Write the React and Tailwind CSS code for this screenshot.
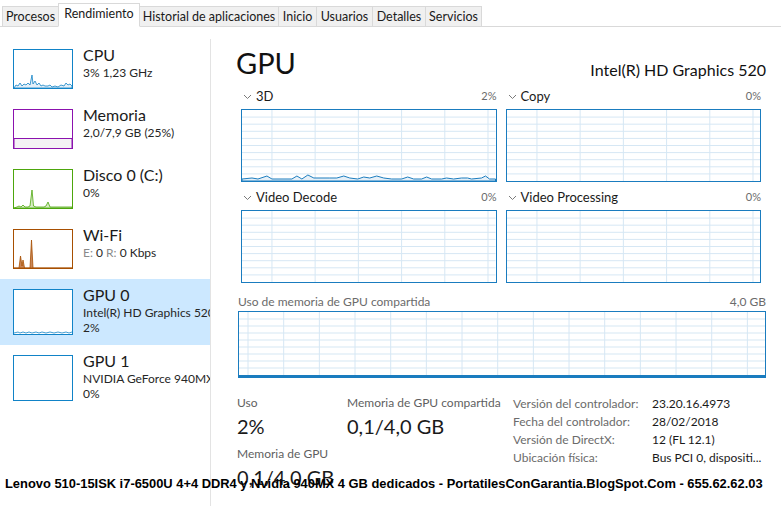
import React from "react";

const tabs = [
  { name: "Procesos", w: "w-[57px]" },
  { name: "Rendimiento", w: "w-[82px]", active: true },
  { name: "Historial de aplicaciones", w: "w-[140px]" },
  { name: "Inicio", w: "w-[39px]" },
  { name: "Usuarios", w: "w-[57px]" },
  { name: "Detalles", w: "w-[54px]" },
  { name: "Servicios", w: "w-[57px]" },
];

// mini graphs for the left list
function Thumb({ color, tall, children }) {
  return (
    <div
      className={`w-[60px] shrink-0 border bg-white ${tall ? "h-[46px]" : "h-[40px]"}`}
      style={{ borderColor: color }}
    >
      <svg width="58" height={tall ? 44 : 38} viewBox={`0 0 58 ${tall ? 44 : 38}`} className="block">
        {children}
      </svg>
    </div>
  );
}

function Side({ title, lines, color, selected, tall, graph }) {
  return (
    <div className={`flex gap-[10px] pl-[13px] py-[10px] overflow-hidden ${selected ? "bg-[#cce8ff]" : ""}`}>
      <Thumb color={color} tall={tall}>{graph}</Thumb>
      <div className="flex flex-col whitespace-nowrap">
        <span className="text-[16px] leading-[20px] text-[#1a1a1a] mt-[-4px]">{title}</span>
        {lines.map((l, i) => (
          <span key={i} className="text-[12px] leading-[15px] text-[#262626]">{l}</span>
        ))}
      </div>
    </div>
  );
}

// big graph with the light blue grid
function Chart({ w, h, x0, dx, rows, children, thick }) {
  const vs = [];
  for (let x = x0; x < w; x += dx) vs.push(x);
  const hs = [];
  for (let i = 1; i < rows; i++) hs.push((h * i) / rows);
  return (
    <div className={`border-[1.5px] border-[#1a7cbf] bg-white ${thick ? "border-b-[3px]" : ""}`}>
      <svg width="100%" height={h} viewBox={`0 0 ${w} ${h}`} preserveAspectRatio="none" className="block">
        {hs.map((y, i) => (
          <line key={"h" + i} x1="0" x2={w} y1={y} y2={y} stroke="#d6e7f4" strokeWidth="1" />
        ))}
        {vs.map((x, i) => (
          <line key={"v" + i} x1={x} x2={x} y1="0" y2={h} stroke="#d6e7f4" strokeWidth="1" />
        ))}
        {children}
      </svg>
    </div>
  );
}

function Chevron() {
  return (
    <svg width="9" height="6" viewBox="0 0 9 6" className="mr-[4px]">
      <path d="M1 1 L4.5 4.5 L8 1" fill="none" stroke="#7a7a7a" strokeWidth="1" />
    </svg>
  );
}

function Engine({ name, pct, children }) {
  return (
    <div className="flex flex-col">
      <div className="flex items-center h-[19px] mb-[3px]">
        <span className="pl-[2px] flex items-center">
          <Chevron />
          <span className="text-[13px] text-[#1a1a1a]">{name}</span>
        </span>
        <span className="ml-auto text-[11px] text-[#6b6b6b]">{pct}</span>
      </div>
      <Chart w={254} h={71} x0={30} dx={43.3} rows={10}>{children}</Chart>
    </div>
  );
}

export default function App() {
  return (
    <div
      className="w-[781px] h-[506px] overflow-hidden relative bg-white text-[#1a1a1a]"
      style={{ fontFamily: "Lato, 'Noto Sans', sans-serif" }}
    >
      {/* tabs */}
      <div className="flex items-end h-[27px] pl-[2px] border-b border-[#d9d9d9]">
        {tabs.map((t) => (
          <div
            key={t.name}
            className={`${t.w} flex items-center justify-center text-[12.5px] border border-[#d9d9d9] -ml-px first:ml-0 ${
              t.active
                ? "h-[24px] bg-white border-b-white -mb-px relative z-10 pb-[2px]"
                : "h-[20px] bg-[#f0f0f0] border-b-0 pt-[1px]"
            }`}
          >
            {t.name}
          </div>
        ))}
      </div>

      <div className="flex h-[479px]">
        {/* list on the left */}
        <div className="w-[211px] shrink-0 pt-[12px]">
          <div className="border-r border-[#e3e3e3] h-full">
            <Side
              title="CPU"
              lines={["3%  1,23 GHz"]}
              color="#1183c7"
              graph={
                <path
                  d="M0 38 L2 35 L4 36 L6 33 L8 36 L10 34 L12 35 L14 33 L16 35 L18 25 L19 34 L21 31 L23 35 L25 33 L27 36 L29 35 L31 36 L34 36 L36 35 L38 37 L41 36 L44 37 L47 35 L50 36 L52 33 L54 35 L56 34 L58 36 L58 38 Z"
                  fill="#e3eff8"
                  stroke="#1183c7"
                  strokeWidth="0.8"
                />
              }
            />
            <Side
              title="Memoria"
              lines={["2,0/7,9 GB (25%)"]}
              color="#8b12ae"
              graph={<rect x="0" y="28.5" width="58" height="10" fill="#f4f2f4" stroke="#8b12ae" strokeWidth="1" />}
            />
            <Side
              title="Disco 0 (C:)"
              lines={["0%"]}
              color="#4da60c"
              graph={
                <path
                  d="M0 38 L3 37 L5 36 L7 37 L9 35 L11 37 L14 37 L16 36 L18 20 L19.5 36 L22 37 L30 37 L32 36 L34 32 L36 37 L58 37 L58 38 Z"
                  fill="#d6ecc4"
                  stroke="#4da60c"
                  strokeWidth="0.8"
                />
              }
            />
            <Side
              title="Wi-Fi"
              lines={[
                <span key="w">
                  <span className="text-[#8a8a8a]">E:</span> 0 <span className="text-[#8a8a8a]">R:</span> 0 Kbps
                </span>,
              ]}
              color="#a74f01"
              graph={
                <path
                  d="M0 38 L5 38 L6.5 26 L8 36 L9 30 L10.5 38 L16 38 L17.5 10 L19 38 L58 38 Z"
                  fill="#c9865a"
                  stroke="#a74f01"
                  strokeWidth="0.8"
                />
              }
            />
            <Side
              title="GPU 0"
              lines={["Intel(R) HD Graphics 520", "2%"]}
              color="#1183c7"
              selected
              tall
              graph={
                <path
                  d="M0 43 L4 42 L6 43 L9 42 L12 43 L15 42 L18 43 L22 42 L25 43 L28 42 L32 43 L36 42 L40 43 L44 42 L48 43 L52 42 L55 43 L58 42"
                  fill="none"
                  stroke="#1183c7"
                  strokeWidth="0.8"
                />
              }
            />
            <Side title="GPU 1" lines={["NVIDIA GeForce 940MX", "0%"]} color="#1183c7" tall graph={null} />
          </div>
        </div>

        {/* detail panel */}
        <div className="flex-1 pl-[25px] pr-[15px] pt-[20px] flex flex-col">
          <div className="flex items-end justify-between h-[32px]">
            <span className="text-[29px] leading-[32px] text-[#111]">GPU</span>
            <span className="text-[16px] leading-[20px] text-[#111] mb-[-1px]">Intel(R) HD Graphics 520</span>
          </div>

          <div className="grid grid-cols-2 gap-x-[9px] gap-y-[6px] pl-[5px] pr-[5px] mt-[8px]">
            <Engine name="3D" pct="2%">
              <path
                d="M0 69 L10 68 L16 69 L25 66 L30 69 L50 69 L55 66 L60 69 L66 65 L72 68 L88 68 L95 68 L102 66 L108 68 L116 69 L122 67 L128 68 L135 66 L142 68 L150 69 L160 69 L166 67 L172 69 L180 69 L185 67 L190 69 L200 69 L205 68 L212 69 L220 68 L226 68 L230 69 L240 68 L244 66 L248 69 L254 69 L254 71 L0 71 Z"
                fill="#e6f0f8"
                stroke="#1a7cbf"
                strokeWidth="1"
              />
            </Engine>
            <Engine name="Copy" pct="0%" />
            <Engine name="Video Decode" pct="0%" />
            <Engine name="Video Processing" pct="0%" />
          </div>

          <div className="flex items-center justify-between text-[12px] text-[#6b6b6b] mt-[10px] h-[17px] pl-[2px]">
            <span>Uso de memoria de GPU compartida</span>
            <span>4,0 GB</span>
          </div>
          <div className="pl-[2px] mt-[1px]">
            <Chart w={525} h={63} x0={9} dx={35.6} rows={9} thick />
          </div>

          <div className="flex items-start mt-[17px] pl-[1px]">
            <div className="w-[110px] flex flex-col">
              <span className="text-[12px] leading-[16px] text-[#5f5f5f]">Uso</span>
              <span className="text-[20px] leading-[26px] mt-[2px]">2%</span>
              <span className="text-[12px] leading-[16px] text-[#5f5f5f] mt-[7px]">Memoria de GPU</span>
              <span className="text-[20px] leading-[26px] mt-[2px]">0,1/4,0 GB</span>
            </div>
            <div className="w-[166px] flex flex-col">
              <span className="text-[12px] leading-[16px] text-[#5f5f5f]">Memoria de GPU compartida</span>
              <span className="text-[20px] leading-[26px] mt-[2px]">0,1/4,0 GB</span>
            </div>
            <div className="grid grid-cols-[139px_1fr] content-start text-[12px] leading-[18px] mt-[0px]">
              <span className="text-[#6b6b6b]">Versión del controlador:</span>
              <span>23.20.16.4973</span>
              <span className="text-[#6b6b6b]">Fecha del controlador:</span>
              <span>28/02/2018</span>
              <span className="text-[#6b6b6b]">Versión de DirectX:</span>
              <span>12 (FL 12.1)</span>
              <span className="text-[#6b6b6b]">Ubicación física:</span>
              <span>Bus PCI 0, dispositi...</span>
            </div>
          </div>
        </div>
      </div>

      {/* caption printed over the screenshot */}
      <div
        className="absolute left-[5px] top-[474px] text-[12.9px] font-bold text-black whitespace-nowrap"
        style={{ fontFamily: "'Liberation Sans', Arial, sans-serif" }}
      >
        Lenovo 510-15ISK i7-6500U 4+4 DDR4 y Nvidia 940MX 4 GB dedicados - PortatilesConGarantia.BlogSpot.Com - 655.62.62.03
      </div>
    </div>
  );
}
